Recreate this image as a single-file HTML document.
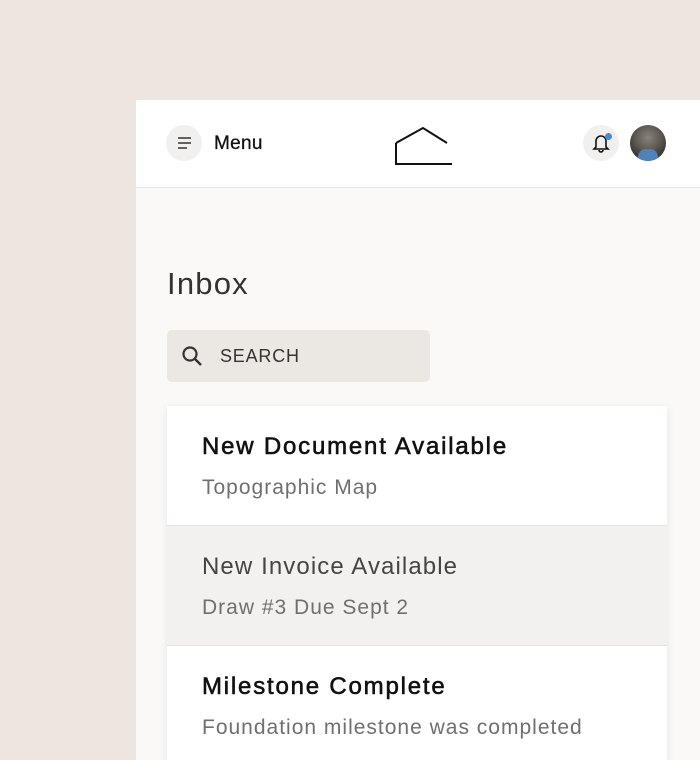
<!DOCTYPE html>
<html><head><meta charset="utf-8"><style>
*{margin:0;padding:0;box-sizing:border-box}
html,body{width:700px;height:760px;overflow:hidden}
body{background:#ede6e0;position:relative;font-family:"Liberation Sans",sans-serif;}
.panel{position:absolute;left:136px;top:100px;width:564px;height:660px;background:#faf9f7;overflow:hidden}
.hdr{position:absolute;left:0;top:0;width:564px;height:88px;background:#fff;border-bottom:1px solid #ebe8e3;}
.circ{position:absolute;width:36px;height:36px;border-radius:50%;background:#f2f0ee;}
.menu{position:absolute;left:78px;top:33px;font-size:19px;color:#111;letter-spacing:.3px;-webkit-text-stroke:.3px #111}
h1{position:absolute;left:31px;top:166px;font-weight:normal;font-size:31px;color:#333;letter-spacing:1.2px}
.search{position:absolute;left:31px;top:230px;width:263px;height:52px;background:#ebe8e3;border-radius:5px;}
.search span{position:absolute;left:53px;top:16px;font-size:18px;color:#333;letter-spacing:.8px}
.card{position:absolute;left:31px;top:306px;width:500px;height:360px;background:#fff;box-shadow:0 2px 8px rgba(0,0,0,.08);}
.row{position:absolute;left:0;width:500px;height:120px;border-bottom:1px solid #e6e3df;}
.t{position:absolute;left:35px;top:27px;font-size:24px;color:#111;letter-spacing:1.8px;-webkit-text-stroke:.6px #111}
.s{position:absolute;left:35px;top:70px;font-size:21px;color:#6f6f6f;letter-spacing:1px}
</style></head><body>
<div class="panel">
 <div class="hdr">
  <div class="circ" style="left:30px;top:25px"></div>
  <svg style="position:absolute;left:41px;top:36px" width="16" height="14"><path d="M1 2h13M1 7h13M1 12h9" stroke="#333" stroke-width="1.6"/></svg>
  <div class="menu">Menu</div>
  <svg style="position:absolute;left:258px;top:24px" width="60" height="44"><path d="M2 19V40H58M2 19L29 4L53 19" fill="none" stroke="#111" stroke-width="2"/></svg>
  <div class="circ" style="left:447px;top:25px"></div>
  <svg style="position:absolute;left:456px;top:33px" width="18" height="20"><path d="M4 14V8a5 5 0 0 1 10 0v6l2 2H2z M7 17a2 2 0 0 0 4 0" fill="none" stroke="#111" stroke-width="1.6"/></svg>
  <div style="position:absolute;left:469px;top:33px;width:7px;height:7px;border-radius:50%;background:#4a8bcf"></div>
  <div style="position:absolute;left:494px;top:25px;width:36px;height:36px;border-radius:50%;background:radial-gradient(circle at 50% 35%,#8a837c 0,#5b5651 45%,#3c3936 70%);overflow:hidden"><div style="position:absolute;left:8px;top:24px;width:20px;height:14px;background:#4d83b8;border-radius:8px 8px 0 0"></div></div>
 </div>
 <h1>Inbox</h1>
 <div class="search">
  <svg style="position:absolute;left:14px;top:15px" width="24" height="24"><circle cx="9" cy="9" r="6.5" fill="none" stroke="#333" stroke-width="2.2"/><path d="M14 14l6 6" stroke="#333" stroke-width="2.4"/></svg>
  <span>SEARCH</span>
 </div>
 <div class="card">
  <div class="row" style="top:0"><div class="t">New Document Available</div><div class="s">Topographic Map</div></div>
  <div class="row" style="top:120px;background:#f3f1ef"><div class="t" style="color:#444;-webkit-text-stroke:0;letter-spacing:1.1px">New Invoice Available</div><div class="s">Draw #3 Due Sept 2</div></div>
  <div class="row" style="top:240px;border:0"><div class="t">Milestone Complete</div><div class="s">Foundation milestone was completed</div></div>
 </div>
</div>
</body></html>
